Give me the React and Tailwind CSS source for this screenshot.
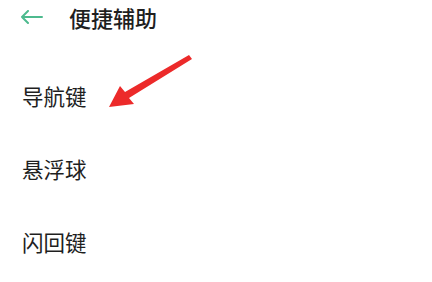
export default function App() {
  const font = { fontFamily: '"Noto Sans CJK SC", "Noto Sans", sans-serif' };
  return (
    <div className="relative w-[432px] h-[282px] bg-white overflow-hidden text-[#1f1f1f]" style={font}>
      <div className="flex items-center h-[34px] pl-[20px]">
        <svg width="23" height="14" viewBox="0 0 23 14" fill="none" stroke="#4dba8e" strokeWidth="2" strokeLinecap="round" strokeLinejoin="round">
          <path d="M22 7H2M8 1L2 7l6 6" />
        </svg>
        <span className="ml-[26px] text-[22px] leading-none font-medium">便捷辅助</span>
      </div>
      <div className="flex flex-col mt-[25px]">
        <div className="h-[73px] flex items-center pl-[22px] text-[21.5px] leading-none">导航键</div>
        <div className="h-[73px] flex items-center pl-[22px] text-[21.5px] leading-none">悬浮球</div>
        <div className="h-[73px] flex items-center pl-[22px] text-[21.5px] leading-none">闪回键</div>
      </div>
      <svg className="absolute left-0 top-0" width="432" height="282" viewBox="0 0 432 282">
        <polygon points="189,55 192,59 129,98 134,104 109,107 120,86 125,92" fill="#ec2a2a" strokeLinejoin="round" />
      </svg>
    </div>
  );
}
